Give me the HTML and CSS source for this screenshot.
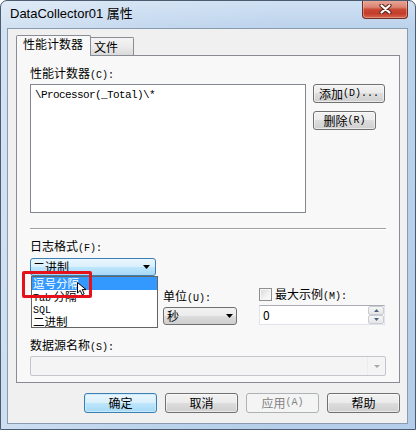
FILE: index.html
```html
<!DOCTYPE html>
<html lang="zh-CN">
<head>
<meta charset="utf-8">
<title>DataCollector01 属性</title>
<link rel="stylesheet" href="styles.css">
</head>
<body>
<div class="window">
  <div class="titlebar">
    <span class="title">DataCollector01 属性</span>
    <div class="close">
      <svg width="13" height="10" viewBox="0 0 13 10">
        <path d="M2.5 1.5 L10.5 8.5 M10.5 1.5 L2.5 8.5" stroke="#5a241b" stroke-width="4.2" stroke-linecap="round" fill="none"/>
        <path d="M2.5 1.5 L10.5 8.5 M10.5 1.5 L2.5 8.5" stroke="#ffffff" stroke-width="2.2" stroke-linecap="round" fill="none"/>
      </svg>
    </div>
  </div>
  <div class="client">
    <div class="tabs">
      <div class="tab tab-active">性能计数器</div>
      <div class="tab tab-inactive">文件</div>
    </div>
    <div class="panel">
      <div class="label">性能计数器<span class="k">(C):</span></div>
      <div class="row-counters">
        <div class="listbox">\Processor(_Total)\*</div>
        <div class="side-buttons">
          <div class="btn btn-add">添加<span class="k">(D)...</span></div>
          <div class="btn btn-del">删除<span class="k">(R)</span></div>
        </div>
      </div>
      <div class="sep"></div>
      <div class="label label-format">日志格式<span class="k">(F):</span></div>
      <div class="combo combo-active">
        <span>二进制</span>
        <svg class="arrow" width="7" height="4" viewBox="0 0 7 4"><polygon points="0,0 7,0 3.5,4" fill="#000"/></svg>
      </div>
      <div class="row-units">
        <div class="col-hidden"></div>
        <div class="col-unit">
          <div class="label label-unit">单位<span class="k">(U):</span></div>
          <div class="combo combo-gray">
            <span>秒</span>
            <svg class="arrow" width="7" height="4" viewBox="0 0 7 4"><polygon points="0,0 7,0 3.5,4" fill="#000"/></svg>
          </div>
        </div>
        <div class="col-max">
          <div class="check-row">
            <span class="checkbox"></span>
            <span class="label">最大示例<span class="k">(M):</span></span>
          </div>
          <div class="spin">
            <span class="spin-value">0</span>
            <div class="spin-buttons">
              <div class="spin-btn"><svg width="5" height="3" viewBox="0 0 5 3"><polygon points="2.5,0 5,3 0,3" fill="#4d6185"/></svg></div>
              <div class="spin-btn"><svg width="5" height="3" viewBox="0 0 5 3"><polygon points="0,0 5,0 2.5,3" fill="#4d6185"/></svg></div>
            </div>
          </div>
        </div>
      </div>
      <div class="label label-ds">数据源名称<span class="k">(S):</span></div>
      <div class="combo combo-disabled">
        <span></span>
        <span class="dis-drop"><svg width="6" height="3" viewBox="0 0 6 3"><polygon points="0,0 6,0 3,3" fill="#a8a8a8"/></svg></span>
      </div>
    </div>
    <div class="buttons">
      <div class="btn btn-main btn-default">确定</div>
      <div class="btn btn-main">取消</div>
      <div class="btn btn-main btn-disabled">应用<span class="k">(A)</span></div>
      <div class="btn btn-main">帮助</div>
    </div>
  </div>

  <div class="dropdown">
    <div class="item item-sel">逗号分隔</div>
    <div class="item"><span class="k">Tab</span> 分隔</div>
    <div class="item"><span class="k">SQL</span></div>
    <div class="item">二进制</div>
  </div>
  <div class="mark"></div>
  <svg class="cursor" width="11" height="14" viewBox="0 0 11 14">
    <polygon points="0.5,0.5 0.5,11 3.2,8.4 5.2,12.8 7.2,11.9 5.3,7.6 9,7.6" fill="#fff" stroke="#000" stroke-width="1" stroke-linejoin="miter"/>
  </svg>
</div>
</body>
</html>
```

FILE: styles.css
```css
* { box-sizing: border-box; }

html, body {
  margin: 0;
  padding: 0;
}

body {
  width: 416px;
  height: 430px;
  overflow: hidden;
  background: #ffffff;
  font-family: "Noto Sans CJK SC", "Liberation Sans", sans-serif;
  font-size: 12px;
  color: #000;
}

.k {
  font-family: "Liberation Mono", "Noto Sans CJK SC", monospace;
  font-size: 10px;
}

.window {
  position: relative;
  width: 416px;
  height: 430px;
  border: 1px solid #4b5b70;
  border-radius: 7px 7px 0 0;
  background:
    linear-gradient(90deg, rgba(255,255,255,0.35) 0%, rgba(255,255,255,0.12) 35%, rgba(255,255,255,0) 70%),
    linear-gradient(180deg, #cfe0f3 0px, #bcd3ec 27px, #b3cdea 100%);
  display: flex;
  flex-direction: column;
  overflow: hidden;
}

.titlebar {
  height: 27px;
  display: flex;
  justify-content: space-between;
  align-items: flex-start;
}

.title {
  padding: 5px 0 0 9px;
  font-family: "Liberation Sans", "Noto Sans CJK SC", sans-serif;
  font-size: 13px;
  line-height: 16px;
  color: #000;
}

.close {
  width: 46px;
  height: 19px;
  margin-right: 7px;
  margin-top: -1px;
  border: 1px solid #6e2f26;
  border-top: none;
  border-radius: 0 0 4px 4px;
  background: linear-gradient(180deg, #e9aa9c 0%, #dc8373 40%, #c94a36 52%, #c43d2a 75%, #d4664c 100%);
  box-shadow: inset 0 0 0 1px rgba(255, 200, 190, 0.45);
  display: flex;
  align-items: center;
  justify-content: center;
}

.client {
  margin: 0 7px 4px 6px;
  border: 1px solid #8a9bb0;
  background: #f0f0f0;
  padding: 6px 0 10px 0;
  display: flex;
  flex-direction: column;
}

.tabs {
  position: relative;
  z-index: 1;
  display: flex;
  align-items: flex-end;
  height: 20px;
  margin-left: 8px;
}

.tab {
  border: 1px solid #898c95;
  border-bottom: none;
  line-height: 16px;
  white-space: nowrap;
}

.tab-active {
  height: 21px;
  margin-bottom: -1px;
  padding: 0 7px 0 6px;
  background: #f8f8f8;
  border-radius: 2px 2px 0 0;
}

.tab-inactive {
  height: 18px;
  padding: 1px 15px 0 3px;
  border-left: none;
  border-radius: 0 2px 0 0;
  background: linear-gradient(180deg, #f4f4f4 0%, #ebebeb 50%, #dadada 100%);
}

.panel {
  margin: 0 7px 0 8px;
  border: 1px solid #898c95;
  background: #f8f8f8;
  padding: 11px 13px 6px 13px;
  display: flex;
  flex-direction: column;
}

.label {
  height: 12px;
  line-height: 12px;
  white-space: nowrap;
}

.row-counters {
  display: flex;
  align-items: flex-start;
  gap: 7px;
  margin-top: 5px;
}

.listbox {
  width: 276px;
  height: 129px;
  background: #fff;
  border: 1px solid #828790;
  padding: 4px 4px;
  font-family: "Liberation Mono", monospace;
  font-size: 11px;
  letter-spacing: -0.6px;
  line-height: 12px;
}

.side-buttons {
  display: flex;
  flex-direction: column;
  align-items: flex-start;
}

.btn {
  height: 19px;
  border: 1px solid #707070;
  border-radius: 3px;
  background: linear-gradient(180deg, #f2f2f2 0%, #ebebeb 49%, #dddddd 50%, #cfcfcf 100%);
  box-shadow: inset 0 0 0 1px rgba(255, 255, 255, 0.55);
  display: flex;
  align-items: center;
  justify-content: center;
  line-height: 12px;
  white-space: nowrap;
}

.btn-add { width: 72px; }
.btn-del { width: 63px; margin-top: 8px; }

.sep {
  margin-top: 15px;
  height: 2px;
  border-top: 1px solid #a0a0a0;
  border-bottom: 1px solid #ffffff;
}

.label-format { margin-top: 10px; }

.combo {
  display: flex;
  align-items: center;
  justify-content: space-between;
  border-radius: 3px;
  line-height: 12px;
}

.combo-active {
  width: 126px;
  height: 18px;
  margin-top: 6px;
  padding: 0 5px 0 2px;
  border: 1px solid #3c7fb1;
  background: linear-gradient(180deg, #eaf6fd 0%, #d9f0fc 49%, #bee6fd 50%, #a7d9f5 100%);
}

.row-units {
  display: flex;
  margin-top: 12px;
}

.col-hidden { width: 133px; }

.col-unit {
  width: 74px;
  display: flex;
  flex-direction: column;
}

.label-unit { margin-top: 2px; }

.combo-gray {
  height: 18px;
  margin-top: 5px;
  padding: 0 3px 0 3px;
  border: 1px solid #707070;
  background: linear-gradient(180deg, #f2f2f2 0%, #ebebeb 49%, #dddddd 50%, #cfcfcf 100%);
}

.col-max {
  width: 126px;
  margin-left: 22px;
  display: flex;
  flex-direction: column;
}

.check-row {
  height: 12px;
  display: flex;
  align-items: center;
  gap: 3px;
}

.checkbox {
  width: 13px;
  height: 13px;
  border: 1px solid #8e8f8f;
  background: linear-gradient(135deg, #d6d6d6 0%, #f2f2f2 60%, #fbfbfb 100%);
  box-shadow: inset 0 0 0 1px #f6f6f6;
}

.spin {
  height: 20px;
  margin-top: 5px;
  border: 1px solid #e2e3ea;
  border-top-color: #abadb3;
  background: #fff;
  display: flex;
  justify-content: space-between;
  align-items: stretch;
}

.spin-value {
  padding-left: 3px;
  line-height: 18px;
}

.spin-buttons {
  width: 16px;
  display: flex;
  flex-direction: column;
  gap: 0;
}

.spin-btn {
  flex: 1;
  display: flex;
  align-items: center;
  justify-content: center;
  border: 1px solid #c8ccd3;
  border-radius: 2px;
  background: linear-gradient(180deg, #f6f6f6 0%, #e6e6e6 100%);
}

.label-ds { margin-top: 14px; }

.combo-disabled {
  height: 20px;
  margin-top: 5px;
  border: 1px solid #c3c6ca;
  border-radius: 2px;
  background: #f4f4f4;
  padding: 0;
}

.dis-drop {
  width: 18px;
  height: 100%;
  display: flex;
  align-items: center;
  justify-content: center;
  border-left: 1px solid #ececec;
}

.buttons {
  display: flex;
  justify-content: flex-end;
  gap: 8px;
  margin: 10px 7px 0 0;
}

.btn-main {
  width: 73px;
  height: 20px;
}

.btn-default {
  border-color: #3c7fb1;
  background: linear-gradient(180deg, #eaf6fd 0%, #d9f0fc 49%, #bee6fd 50%, #a7d9f5 100%);
  box-shadow: inset 0 0 0 1px rgba(200, 235, 255, 0.9);
}

.btn-disabled {
  border-color: #adb2b5;
  background: #f4f4f4;
  box-shadow: none;
  color: #838383;
}

.dropdown {
  position: absolute;
  left: 30px;
  top: 275px;
  width: 127px;
  border: 1px solid #646464;
  background: #fff;
  z-index: 5;
}

.item {
  height: 12.5px;
  line-height: 12.5px;
  padding-left: 1px;
  font-size: 11.5px;
  white-space: nowrap;
}

.item .k {
  line-height: 10px;
}

.item-sel {
  background: #3399ff;
  color: #fff;
}

.mark {
  position: absolute;
  left: 21px;
  top: 270px;
  width: 70px;
  height: 27px;
  border: 3px solid #e5121b;
  border-radius: 2px;
  z-index: 6;
}

.cursor {
  position: absolute;
  left: 76px;
  top: 281px;
  z-index: 7;
}
```
